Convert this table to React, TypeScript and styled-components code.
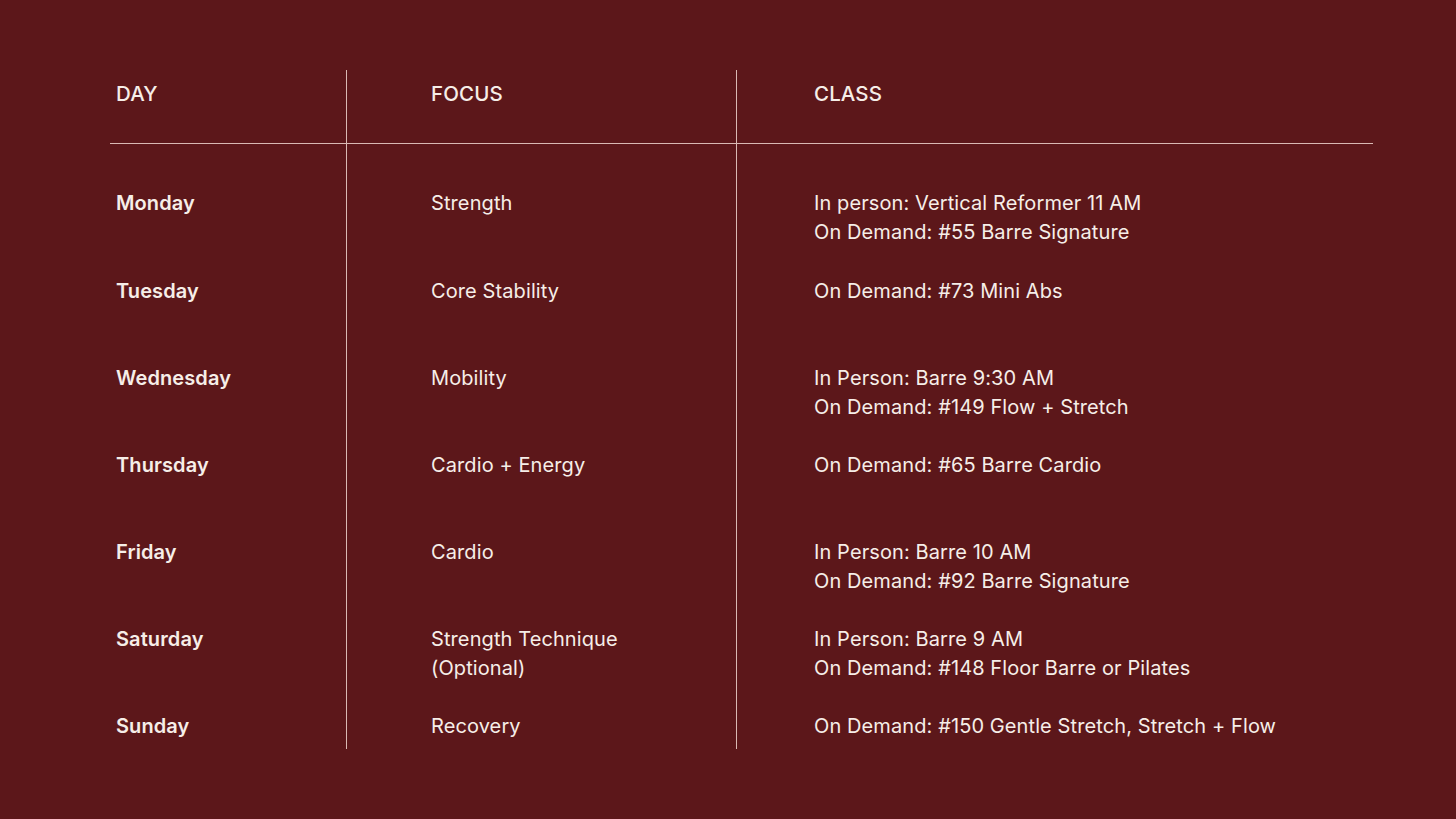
import React from 'react';
import styled, { createGlobalStyle } from 'styled-components';

interface IRow {
  day: string;
  focus: string[];
  classes: string[];
}

const rows: IRow[] = [
  {
    day: 'Monday',
    focus: ['Strength'],
    classes: ['In person: Vertical Reformer 11 AM', 'On Demand: #55 Barre Signature'],
  },
  { day: 'Tuesday', focus: ['Core Stability'], classes: ['On Demand: #73 Mini Abs'] },
  {
    day: 'Wednesday',
    focus: ['Mobility'],
    classes: ['In Person: Barre 9:30 AM', 'On Demand: #149 Flow + Stretch'],
  },
  { day: 'Thursday', focus: ['Cardio + Energy'], classes: ['On Demand: #65 Barre Cardio'] },
  {
    day: 'Friday',
    focus: ['Cardio'],
    classes: ['In Person: Barre 10 AM', 'On Demand: #92 Barre Signature'],
  },
  {
    day: 'Saturday',
    focus: ['Strength Technique', '(Optional)'],
    classes: ['In Person: Barre 9 AM', 'On Demand: #148 Floor Barre or Pilates'],
  },
  {
    day: 'Sunday',
    focus: ['Recovery'],
    classes: ['On Demand: #150 Gentle Stretch, Stretch + Flow'],
  },
];

const GlobalStyle = createGlobalStyle`
  html, body {
    margin: 0;
    padding: 0;
    background: #5c171a;
  }
  body {
    font-family: Inter, 'Liberation Sans', Arial, sans-serif;
    color: #f6eee8;
  }
`;

const Page = styled.div`
  width: 1456px;
  height: 819px;
  background: #5c171a;
  padding: 70px 0 0 110px;
  box-sizing: border-box;
`;

const Table = styled.div`
  display: grid;
  grid-template-columns: 236px 390px 637px;
`;

const Cell = styled.div<{ $col: number; $head?: boolean; $first?: boolean; $last?: boolean }>`
  box-sizing: border-box;
  padding-left: ${(p) => (p.$col === 0 ? 6 : p.$col === 1 ? 84 : 77)}px;
  border-left: ${(p) => (p.$col === 0 ? 'none' : '1px solid rgba(240, 214, 208, 0.85)')};
  font-size: 20px;
  line-height: 29px;
  letter-spacing: 0.1px;
  ${(p) =>
    p.$head
      ? `
    height: 74px;
    padding-top: 9px;
    border-bottom: 1px solid rgba(240, 214, 208, 0.85);
    font-weight: 500;
    font-size: 20.5px;
  `
      : `
    min-height: ${p.$last ? 38 : 87}px;
    padding-top: ${p.$first ? 45 : 1}px;
    ${p.$first ? 'min-height: 132px;' : ''}
  `}
`;

const DayName = styled.span`
  font-weight: 600;
`;

const Line = styled.div`
  white-space: nowrap;
`;

const App: React.FC = () => {
  return (
    <Page>
      <GlobalStyle />
      <Table>
        <Cell $col={0} $head>DAY</Cell>
        <Cell $col={1} $head>FOCUS</Cell>
        <Cell $col={2} $head>CLASS</Cell>
        {rows.map((r, i) => {
          const first = i === 0;
          const last = i === rows.length - 1;
          return (
            <React.Fragment key={r.day}>
              <Cell $col={0} $first={first} $last={last}>
                <DayName>{r.day}</DayName>
              </Cell>
              <Cell $col={1} $first={first} $last={last}>
                {r.focus.map((f) => (
                  <Line key={f}>{f}</Line>
                ))}
              </Cell>
              <Cell $col={2} $first={first} $last={last}>
                {r.classes.map((c) => (
                  <Line key={c}>{c}</Line>
                ))}
              </Cell>
            </React.Fragment>
          );
        })}
      </Table>
    </Page>
  );
};

export default App;
